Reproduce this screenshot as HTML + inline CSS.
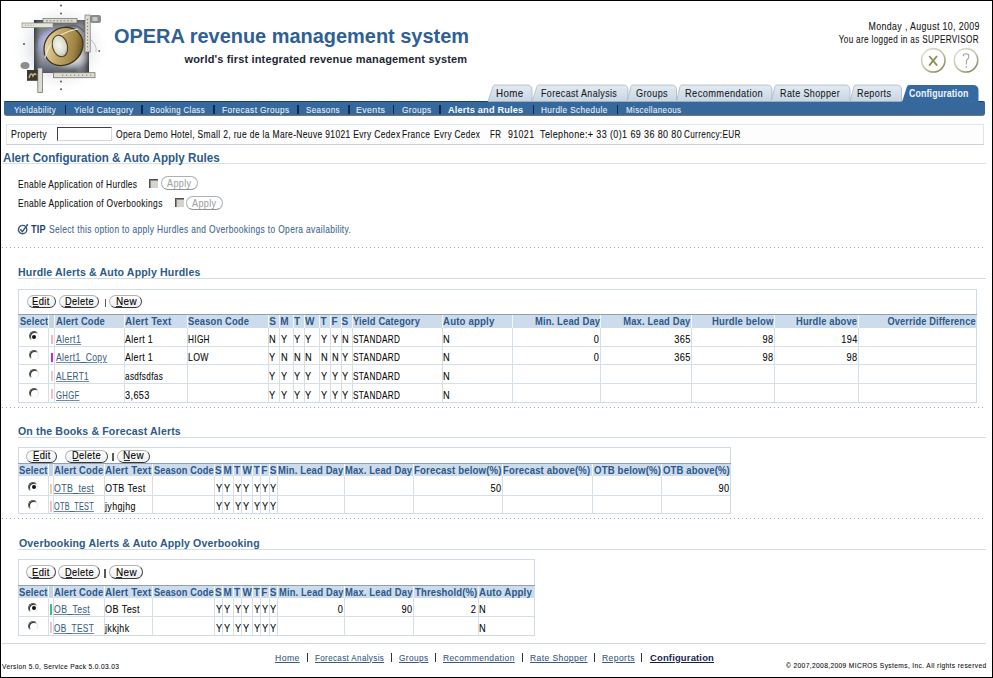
<!DOCTYPE html>
<html><head><meta charset="utf-8">
<style>
*{box-sizing:border-box}
html,body{margin:0;padding:0;background:#fff}
body{width:993px;height:678px;position:relative;overflow:hidden;font-family:"Liberation Sans",sans-serif;font-size:10px;color:#111}
.a{position:absolute;white-space:nowrap}
#frame{position:absolute;left:0;top:0;width:993px;height:678px;border:1px solid #000;z-index:50}
.btn{border:1px solid;border-color:#b4b4b4 #404040 #363636 #b4b4b4;border-radius:7px;background:linear-gradient(#ffffff,#eeeeee);z-index:2}
.radio{width:10px;height:10px;border-radius:50%;border:1px solid;border-color:#5a5a5a #e6e6e6 #f4f4f4 #5a5a5a;box-shadow:inset 1px 1px 0 #303030;background:#fff}
.radio.on:after{content:"";position:absolute;left:2.5px;top:2.5px;width:4px;height:4px;border-radius:50%;background:#111}
</style></head>
<body>
<div id="frame"></div>

<!-- LOGO -->
<svg class="a" style="left:0px;top:0px" width="110" height="100" viewBox="0 0 110 100">
 <defs>
  <radialGradient id="glow" cx="0.5" cy="0.5" r="0.5">
   <stop offset="0" stop-color="#aeb4bf" stop-opacity="0.85"/><stop offset="0.6" stop-color="#d9dde4" stop-opacity="0.55"/><stop offset="1" stop-color="#fff" stop-opacity="0"/>
  </radialGradient>
  <linearGradient id="sqv" x1="0" y1="0" x2="0" y2="1">
   <stop offset="0" stop-color="#2e3034"/><stop offset="0.12" stop-color="#6c7078"/><stop offset="0.55" stop-color="#c9ccd2"/><stop offset="0.85" stop-color="#6d7280"/><stop offset="1" stop-color="#3a3c42"/>
  </linearGradient>
  <linearGradient id="sqh" x1="0" y1="0" x2="1" y2="0">
   <stop offset="0" stop-color="#2a2c30" stop-opacity="0.85"/><stop offset="0.15" stop-color="#8a9098" stop-opacity="0.3"/><stop offset="0.75" stop-color="#fff" stop-opacity="0.15"/><stop offset="1" stop-color="#2e3034" stop-opacity="0.85"/>
  </linearGradient>
  <radialGradient id="whiteglow" cx="0.5" cy="0.5" r="0.5">
   <stop offset="0" stop-color="#ffffff" stop-opacity="0.9"/><stop offset="1" stop-color="#ffffff" stop-opacity="0"/>
  </radialGradient>
  <linearGradient id="gold" x1="0.1" y1="0.1" x2="0.9" y2="0.9">
   <stop offset="0" stop-color="#eadfb4"/><stop offset="0.35" stop-color="#c6ad6c"/><stop offset="0.75" stop-color="#a08444"/><stop offset="1" stop-color="#5a4822"/>
  </linearGradient>
  <radialGradient id="globe" cx="0.45" cy="0.5" r="0.6">
   <stop offset="0" stop-color="#d4d6e2"/><stop offset="0.6" stop-color="#a8a8cc"/><stop offset="0.88" stop-color="#7c7cb0"/><stop offset="1" stop-color="#34365a"/>
  </radialGradient>
  <radialGradient id="hole" cx="0.45" cy="0.45" r="0.6">
   <stop offset="0" stop-color="#f6f8f0"/><stop offset="0.7" stop-color="#d8dccc"/><stop offset="1" stop-color="#9a9a78"/>
  </radialGradient>
 </defs>
 <ellipse cx="60" cy="48" rx="50" ry="46" fill="url(#glow)"/>
 <rect x="34" y="20" width="55" height="53" fill="url(#sqv)"/>
 <rect x="34" y="20" width="55" height="53" fill="url(#sqh)"/>
 <ellipse cx="70" cy="58" rx="20" ry="12" fill="url(#whiteglow)"/>
 <circle cx="54" cy="44" r="16" fill="url(#globe)"/>
 <path d="M62 28 Q78 22 84 32" fill="none" stroke="#60646c" stroke-width="1.3"/><path d="M86 36 Q98 44 96 52" fill="none" stroke="#b0b4ba" stroke-width="0.8"/>
  <ellipse cx="63.5" cy="46.5" rx="20.5" ry="18" fill="url(#gold)" stroke="#3e3218" stroke-width="1.3" transform="rotate(-40 63.5 46.5)"/>
 <path d="M45 58 Q50 34 78 29" fill="none" stroke="#f2f2ea" stroke-width="1.1" opacity="0.9"/>
 <ellipse cx="60" cy="46" rx="7.5" ry="11" fill="url(#hole)" stroke="#4a3a1c" stroke-width="1" transform="rotate(-15 60 46)"/>
 
 <rect x="43" y="18.5" width="34" height="4.5" fill="#dcdcd4" stroke="#6e6e68" stroke-width="0.7"/><path d="M46 20.8 H74" stroke="#77776f" stroke-width="0.8" stroke-dasharray="2 1.5"/>
 <rect x="22" y="23" width="31" height="4.5" fill="#e4e4dc" stroke="#86867e" stroke-width="0.7"/><path d="M25 25.2 H34" stroke="#8a8a82" stroke-width="0.8" stroke-dasharray="1.2 1.5"/>
 <rect x="85" y="15" width="5.2" height="37" fill="#dcdcd4" stroke="#74746c" stroke-width="0.7"/>
 <path d="M87.6 19 V50" stroke="#6a6a62" stroke-width="0.9" stroke-dasharray="1.2 2.2"/>
 <rect x="53.5" y="72.7" width="41.5" height="5" fill="#dcdcd4" stroke="#74746c" stroke-width="0.8"/>
 <path d="M62 75.2 H92" stroke="#6a6a62" stroke-width="0.9" stroke-dasharray="1.2 2.8"/>
 <rect x="37.8" y="68" width="4.6" height="24.5" fill="#dcdcd4" stroke="#74746c" stroke-width="0.8"/>
 <rect x="90" y="15" width="11" height="8" fill="#8c8c8c" rx="2"/><rect x="92.5" y="17" width="5" height="4" fill="#c8c8c8"/>
 <rect x="27" y="70" width="10.7" height="10.8" fill="#3c382c"/>
 <path d="M29 78 Q31 71 33 76 Q35 72 36 75" fill="none" stroke="#c8b890" stroke-width="1.4"/>
 <ellipse cx="25" cy="65.5" rx="4.5" ry="3.5" fill="#7a7a78" opacity="0.85"/>
 <circle cx="61" cy="5.5" r="1" fill="#555"/><circle cx="61" cy="13.6" r="1" fill="#555"/>
 <circle cx="61" cy="81.5" r="1" fill="#555"/><circle cx="61" cy="89.3" r="1" fill="#555"/>
 <circle cx="24" cy="44" r="1" fill="#555"/><circle cx="99.2" cy="51" r="1" fill="#666"/>
</svg>

<!-- help / exit icons -->
<svg class="a" style="left:919px;top:46px" width="62" height="28" viewBox="0 0 62 28">
 <defs>
  <linearGradient id="ring" x1="0.15" y1="0.1" x2="0.85" y2="0.95">
   <stop offset="0" stop-color="#dcdccf"/><stop offset="0.5" stop-color="#c4c4ac"/><stop offset="1" stop-color="#85885a"/>
  </linearGradient>
 </defs>
 <circle cx="14.3" cy="14.3" r="11.7" fill="#fff" stroke="url(#ring)" stroke-width="1.6"/>
 <path d="M10.2 10 L18.2 19.6 M18 10 L10.2 19.6" stroke="#8b8f5a" stroke-width="1.8"/>
 <circle cx="47" cy="14.3" r="11.7" fill="#fff" stroke="url(#ring)" stroke-width="1.6"/>
 <path d="M44.2 10.2 Q44.2 7.7 47 7.7 Q49.8 7.7 49.8 10.4 Q49.8 12.4 47.4 14.4 L47.4 18.4" fill="none" stroke="#a0a0a0" stroke-width="1.05"/>
 <circle cx="47.4" cy="21" r="0.75" fill="#8a8a8a"/>
</svg>

<!-- TABS -->
<svg class="a" style="left:480px;top:80px;z-index:2" width="510" height="24" viewBox="480 80 510 24">
 <defs>
  <linearGradient id="tg" x1="0" y1="0" x2="0" y2="1"><stop offset="0" stop-color="#e4ebf2"/><stop offset="1" stop-color="#c7d5e3"/></linearGradient>
 </defs>
 <g fill="url(#tg)" stroke="#a9b6c3" stroke-width="0.8">
  <path d="M488 101.5 L493 86.5 Q493.5 85 495 85 L527 85 Q532 85 532 90 L532 101.5 Z"/>
  <path d="M532 101.5 L537 86.5 Q537.5 85 539 85 L623 85 Q628 85 628 90 L628 101.5 Z"/>
  <path d="M627 101.5 L631 86.5 Q631.5 85 633 85 L671.5 85 Q676.5 85 676.5 90 L676.5 101.5 Z"/>
  <path d="M676.5 101.5 L680 86.5 Q680.5 85 682 85 L767 85 Q772 85 772 90 L772 101.5 Z"/>
  <path d="M771 101.5 L775 86.5 Q775.5 85 777 85 L845 85 Q850 85 850 90 L850 101.5 Z"/>
  <path d="M850 101.5 L854 86.5 Q854.5 85 856 85 L896.5 85 Q901.5 85 901.5 90 L901.5 101.5 Z"/>
 </g>
 <path d="M902 102 L907 86.5 Q907.5 85 909 85 L973 85 Q978.5 85 978.5 90.5 L978.5 102 Z" fill="#3769a1"/>
</svg>

<!-- SUBNAV BAR -->
<div class="a" style="left:4px;top:101px;width:981px;height:15px;background:linear-gradient(#36689c 0,#36689c 11px,#4b6684 13px,#7d8a98 14px);border-top:1px solid #123e70;border-radius:1px 2px 3px 3px;z-index:1"></div>

<!-- PROPERTY BOX -->
<div class="a" style="left:6px;top:124px;width:978px;height:21px;border:1px solid #e0e6ec;border-bottom-color:#c9d2db;background:#fdfdfd"></div>
<div class="a" style="left:57px;top:127px;width:55px;height:14px;border:1px solid;border-color:#404040 #d6d6d6 #d6d6d6 #404040;background:#fff"></div>

<!-- alert config -->
<div class="a" style="left:3px;top:163px;width:983px;height:1px;background:#d9e1e8"></div>
<div class="a" style="left:149px;top:179px;width:9px;height:8.5px;border-left:1px solid #505050;border-top:1px solid #505050;box-shadow:inset 1px 1px 0 #8a8a8a;background:#d6d3cc"></div>
<div class="a" style="left:161px;top:176px;width:36.5px;height:14.3px;border:1px solid #a9b2ba;border-bottom-color:#8c949c;border-radius:7px;background:#fff"></div>
<div class="a" style="left:174.5px;top:198.3px;width:9px;height:8.5px;border-left:1px solid #505050;border-top:1px solid #505050;box-shadow:inset 1px 1px 0 #8a8a8a;background:#d6d3cc"></div>
<div class="a" style="left:186.2px;top:196.3px;width:36.5px;height:13.5px;border:1px solid #a9b2ba;border-bottom-color:#8c949c;border-radius:7px;background:#fff"></div>
<svg class="a" style="left:17px;top:223px" width="12" height="12" viewBox="0 0 12 12">
 <circle cx="5.6" cy="6.6" r="4.2" fill="none" stroke="#3d5a7a" stroke-width="1.4"/>
 <path d="M3.2 6.2 L5.4 8.6 L10.8 1.2" fill="none" stroke="#3d5a7a" stroke-width="1.6"/>
</svg>
<div class="a" style="left:2px;top:247px;width:984px;height:1px;background-image:linear-gradient(to right,#a6a6a6 0,#a6a6a6 1px,transparent 1px);background-size:4px 1px"></div>

<!-- section underlines -->
<div class="a" style="left:18px;top:278px;width:968px;height:1px;background:#d3dce4"></div>
<div class="a" style="left:2px;top:407px;width:984px;height:1px;background-image:linear-gradient(to right,#a6a6a6 0,#a6a6a6 1px,transparent 1px);background-size:4px 1px"></div>
<div class="a" style="left:18px;top:437px;width:968px;height:1px;background:#d3dce4"></div>
<div class="a" style="left:2px;top:518px;width:984px;height:1px;background-image:linear-gradient(to right,#a6a6a6 0,#a6a6a6 1px,transparent 1px);background-size:4px 1px"></div>
<div class="a" style="left:18px;top:549px;width:968px;height:1px;background:#d3dce4"></div>

<!-- footer line -->
<div class="a" style="left:2px;top:643px;width:984px;height:1px;background:#d3d9de"></div>

<div class="a" style="left:64.8px;top:105px;width:1.6px;height:9px;background:#0c2a52;z-index:3"></div>
<div class="a" style="left:141.3px;top:105px;width:1.6px;height:9px;background:#0c2a52;z-index:3"></div>
<div class="a" style="left:213.3px;top:105px;width:1.6px;height:9px;background:#0c2a52;z-index:3"></div>
<div class="a" style="left:297.2px;top:105px;width:1.6px;height:9px;background:#0c2a52;z-index:3"></div>
<div class="a" style="left:348.1px;top:105px;width:1.6px;height:9px;background:#0c2a52;z-index:3"></div>
<div class="a" style="left:392.8px;top:105px;width:1.6px;height:9px;background:#0c2a52;z-index:3"></div>
<div class="a" style="left:439.4px;top:105px;width:1.6px;height:9px;background:#0c2a52;z-index:3"></div>
<div class="a" style="left:532.7px;top:105px;width:1.6px;height:9px;background:#0c2a52;z-index:3"></div>
<div class="a" style="left:616.5px;top:105px;width:1.6px;height:9px;background:#0c2a52;z-index:3"></div>
<div class="a" style="left:18px;top:289px;width:959px;height:114px;border:1px solid #cfdae4"></div>
<div class="a" style="left:18px;top:314px;width:959px;height:14px;background:#cddcec;border-top:1px solid #919fae"></div>
<div class="a" style="left:48px;top:315px;width:6px;height:13px;background:#c6d3e0"></div>
<div class="a" style="left:48px;top:315px;width:1px;height:13px;background:#f4f8fb"></div>
<div class="a" style="left:54px;top:315px;width:1px;height:13px;background:#f4f8fb"></div>
<div class="a" style="left:124px;top:315px;width:1px;height:13px;background:#f4f8fb"></div>
<div class="a" style="left:187px;top:315px;width:1px;height:13px;background:#f4f8fb"></div>
<div class="a" style="left:268px;top:315px;width:1px;height:13px;background:#f4f8fb"></div>
<div class="a" style="left:279px;top:315px;width:1px;height:13px;background:#f4f8fb"></div>
<div class="a" style="left:293px;top:315px;width:1px;height:13px;background:#f4f8fb"></div>
<div class="a" style="left:304px;top:315px;width:1px;height:13px;background:#f4f8fb"></div>
<div class="a" style="left:319px;top:315px;width:1px;height:13px;background:#f4f8fb"></div>
<div class="a" style="left:330px;top:315px;width:1px;height:13px;background:#f4f8fb"></div>
<div class="a" style="left:341px;top:315px;width:1px;height:13px;background:#f4f8fb"></div>
<div class="a" style="left:352px;top:315px;width:1px;height:13px;background:#f4f8fb"></div>
<div class="a" style="left:442px;top:315px;width:1px;height:13px;background:#f4f8fb"></div>
<div class="a" style="left:512px;top:315px;width:1px;height:13px;background:#f4f8fb"></div>
<div class="a" style="left:600px;top:315px;width:1px;height:13px;background:#f4f8fb"></div>
<div class="a" style="left:691px;top:315px;width:1px;height:13px;background:#f4f8fb"></div>
<div class="a" style="left:774px;top:315px;width:1px;height:13px;background:#f4f8fb"></div>
<div class="a" style="left:858px;top:315px;width:1px;height:13px;background:#f4f8fb"></div>
<div class="a" style="left:48px;top:328px;width:1px;height:74px;background:#d5dfe8"></div>
<div class="a" style="left:54px;top:328px;width:1px;height:74px;background:#d5dfe8"></div>
<div class="a" style="left:124px;top:328px;width:1px;height:74px;background:#d5dfe8"></div>
<div class="a" style="left:187px;top:328px;width:1px;height:74px;background:#d5dfe8"></div>
<div class="a" style="left:268px;top:328px;width:1px;height:74px;background:#d5dfe8"></div>
<div class="a" style="left:279px;top:328px;width:1px;height:74px;background:#d5dfe8"></div>
<div class="a" style="left:293px;top:328px;width:1px;height:74px;background:#d5dfe8"></div>
<div class="a" style="left:304px;top:328px;width:1px;height:74px;background:#d5dfe8"></div>
<div class="a" style="left:319px;top:328px;width:1px;height:74px;background:#d5dfe8"></div>
<div class="a" style="left:330px;top:328px;width:1px;height:74px;background:#d5dfe8"></div>
<div class="a" style="left:341px;top:328px;width:1px;height:74px;background:#d5dfe8"></div>
<div class="a" style="left:352px;top:328px;width:1px;height:74px;background:#d5dfe8"></div>
<div class="a" style="left:442px;top:328px;width:1px;height:74px;background:#d5dfe8"></div>
<div class="a" style="left:512px;top:328px;width:1px;height:74px;background:#d5dfe8"></div>
<div class="a" style="left:600px;top:328px;width:1px;height:74px;background:#d5dfe8"></div>
<div class="a" style="left:691px;top:328px;width:1px;height:74px;background:#d5dfe8"></div>
<div class="a" style="left:774px;top:328px;width:1px;height:74px;background:#d5dfe8"></div>
<div class="a" style="left:858px;top:328px;width:1px;height:74px;background:#d5dfe8"></div>
<div class="a" style="left:18px;top:346px;width:958px;height:1px;background:#d5dfe8"></div>
<div class="a" style="left:18px;top:364px;width:958px;height:1px;background:#d5dfe8"></div>
<div class="a" style="left:18px;top:383px;width:958px;height:1px;background:#d5dfe8"></div>
<div class="a radio on" style="left:28.6px;top:331.3px"></div>
<div class="a" style="left:50.7px;top:334.5px;width:2px;height:9.100000000000023px;background:#f0b4c6"></div>
<div class="a radio" style="left:28.6px;top:350.2px"></div>
<div class="a" style="left:50.7px;top:352.7px;width:2px;height:9.800000000000011px;background:#c428c4"></div>
<div class="a radio" style="left:28.6px;top:369px"></div>
<div class="a" style="left:50.7px;top:371px;width:2px;height:9.699999999999989px;background:#f2c6c8"></div>
<div class="a radio" style="left:28.6px;top:387.8px"></div>
<div class="a" style="left:50.7px;top:389px;width:2px;height:10px;background:#f0c0c8"></div>
<div class="a btn" style="left:26.5px;top:295.2px;width:29.1px;height:13.300000000000011px"></div>
<div class="a" style="left:33.099999999999994px;top:306.3px;width:6px;height:1px;background:#333;z-index:4"></div>
<div class="a btn" style="left:58.6px;top:295.2px;width:40.6px;height:13.300000000000011px"></div>
<div class="a" style="left:65.35000000000001px;top:306.3px;width:6px;height:1px;background:#333;z-index:4"></div>
<div class="a" style="left:104.5px;top:298.7px;width:1.7px;height:8.300000000000011px;background:#5a5a5a"></div>
<div class="a btn" style="left:109.4px;top:295.2px;width:33.0px;height:13.300000000000011px"></div>
<div class="a" style="left:116.35000000000001px;top:306.3px;width:6px;height:1px;background:#333;z-index:4"></div>
<div class="a" style="left:18px;top:447px;width:713px;height:67px;border:1px solid #cfdae4"></div>
<div class="a" style="left:18px;top:463px;width:713px;height:13px;background:#cddcec;border-top:1px solid #919fae"></div>
<div class="a" style="left:48px;top:464px;width:5px;height:12px;background:#c6d3e0"></div>
<div class="a" style="left:48px;top:464px;width:1px;height:12px;background:#f4f8fb"></div>
<div class="a" style="left:53px;top:464px;width:1px;height:12px;background:#f4f8fb"></div>
<div class="a" style="left:104px;top:464px;width:1px;height:12px;background:#f4f8fb"></div>
<div class="a" style="left:152px;top:464px;width:1px;height:12px;background:#f4f8fb"></div>
<div class="a" style="left:214px;top:464px;width:1px;height:12px;background:#f4f8fb"></div>
<div class="a" style="left:222px;top:464px;width:1px;height:12px;background:#f4f8fb"></div>
<div class="a" style="left:233px;top:464px;width:1px;height:12px;background:#f4f8fb"></div>
<div class="a" style="left:241px;top:464px;width:1px;height:12px;background:#f4f8fb"></div>
<div class="a" style="left:252px;top:464px;width:1px;height:12px;background:#f4f8fb"></div>
<div class="a" style="left:260px;top:464px;width:1px;height:12px;background:#f4f8fb"></div>
<div class="a" style="left:269px;top:464px;width:1px;height:12px;background:#f4f8fb"></div>
<div class="a" style="left:277px;top:464px;width:1px;height:12px;background:#f4f8fb"></div>
<div class="a" style="left:344px;top:464px;width:1px;height:12px;background:#f4f8fb"></div>
<div class="a" style="left:413px;top:464px;width:1px;height:12px;background:#f4f8fb"></div>
<div class="a" style="left:502px;top:464px;width:1px;height:12px;background:#f4f8fb"></div>
<div class="a" style="left:592px;top:464px;width:1px;height:12px;background:#f4f8fb"></div>
<div class="a" style="left:661px;top:464px;width:1px;height:12px;background:#f4f8fb"></div>
<div class="a" style="left:48px;top:476px;width:1px;height:37px;background:#d5dfe8"></div>
<div class="a" style="left:53px;top:476px;width:1px;height:37px;background:#d5dfe8"></div>
<div class="a" style="left:104px;top:476px;width:1px;height:37px;background:#d5dfe8"></div>
<div class="a" style="left:152px;top:476px;width:1px;height:37px;background:#d5dfe8"></div>
<div class="a" style="left:214px;top:476px;width:1px;height:37px;background:#d5dfe8"></div>
<div class="a" style="left:222px;top:476px;width:1px;height:37px;background:#d5dfe8"></div>
<div class="a" style="left:233px;top:476px;width:1px;height:37px;background:#d5dfe8"></div>
<div class="a" style="left:241px;top:476px;width:1px;height:37px;background:#d5dfe8"></div>
<div class="a" style="left:252px;top:476px;width:1px;height:37px;background:#d5dfe8"></div>
<div class="a" style="left:260px;top:476px;width:1px;height:37px;background:#d5dfe8"></div>
<div class="a" style="left:269px;top:476px;width:1px;height:37px;background:#d5dfe8"></div>
<div class="a" style="left:277px;top:476px;width:1px;height:37px;background:#d5dfe8"></div>
<div class="a" style="left:344px;top:476px;width:1px;height:37px;background:#d5dfe8"></div>
<div class="a" style="left:413px;top:476px;width:1px;height:37px;background:#d5dfe8"></div>
<div class="a" style="left:502px;top:476px;width:1px;height:37px;background:#d5dfe8"></div>
<div class="a" style="left:592px;top:476px;width:1px;height:37px;background:#d5dfe8"></div>
<div class="a" style="left:661px;top:476px;width:1px;height:37px;background:#d5dfe8"></div>
<div class="a" style="left:18px;top:495px;width:712px;height:1px;background:#d5dfe8"></div>
<div class="a radio on" style="left:28.200000000000003px;top:481.6px"></div>
<div class="a" style="left:50.4px;top:483.5px;width:2px;height:10.100000000000023px;background:#f3cc98"></div>
<div class="a radio" style="left:28.200000000000003px;top:500px"></div>
<div class="a" style="left:50.4px;top:501px;width:2px;height:10.5px;background:#f0c2cc"></div>
<div class="a btn" style="left:25.8px;top:449.7px;width:30.999999999999996px;height:12.900000000000034px"></div>
<div class="a" style="left:33.349999999999994px;top:460.40000000000003px;width:6px;height:1px;background:#333;z-index:4"></div>
<div class="a btn" style="left:64.9px;top:449.7px;width:42.89999999999999px;height:12.900000000000034px"></div>
<div class="a" style="left:72.8px;top:460.40000000000003px;width:6px;height:1px;background:#333;z-index:4"></div>
<div class="a" style="left:112px;top:453.2px;width:1.7px;height:7.900000000000034px;background:#5a5a5a"></div>
<div class="a btn" style="left:116.8px;top:449.7px;width:33.2px;height:12.900000000000034px"></div>
<div class="a" style="left:123.85000000000001px;top:460.40000000000003px;width:6px;height:1px;background:#333;z-index:4"></div>
<div class="a" style="left:18px;top:559px;width:517px;height:77px;border:1px solid #cfdae4"></div>
<div class="a" style="left:18px;top:585px;width:517px;height:13px;background:#cddcec;border-top:1px solid #919fae"></div>
<div class="a" style="left:48px;top:586px;width:5px;height:12px;background:#c6d3e0"></div>
<div class="a" style="left:48px;top:586px;width:1px;height:12px;background:#f4f8fb"></div>
<div class="a" style="left:53px;top:586px;width:1px;height:12px;background:#f4f8fb"></div>
<div class="a" style="left:104px;top:586px;width:1px;height:12px;background:#f4f8fb"></div>
<div class="a" style="left:152px;top:586px;width:1px;height:12px;background:#f4f8fb"></div>
<div class="a" style="left:214px;top:586px;width:1px;height:12px;background:#f4f8fb"></div>
<div class="a" style="left:222px;top:586px;width:1px;height:12px;background:#f4f8fb"></div>
<div class="a" style="left:233px;top:586px;width:1px;height:12px;background:#f4f8fb"></div>
<div class="a" style="left:241px;top:586px;width:1px;height:12px;background:#f4f8fb"></div>
<div class="a" style="left:252px;top:586px;width:1px;height:12px;background:#f4f8fb"></div>
<div class="a" style="left:260px;top:586px;width:1px;height:12px;background:#f4f8fb"></div>
<div class="a" style="left:269px;top:586px;width:1px;height:12px;background:#f4f8fb"></div>
<div class="a" style="left:277px;top:586px;width:1px;height:12px;background:#f4f8fb"></div>
<div class="a" style="left:344px;top:586px;width:1px;height:12px;background:#f4f8fb"></div>
<div class="a" style="left:413px;top:586px;width:1px;height:12px;background:#f4f8fb"></div>
<div class="a" style="left:478px;top:586px;width:1px;height:12px;background:#f4f8fb"></div>
<div class="a" style="left:48px;top:598px;width:1px;height:37px;background:#d5dfe8"></div>
<div class="a" style="left:53px;top:598px;width:1px;height:37px;background:#d5dfe8"></div>
<div class="a" style="left:104px;top:598px;width:1px;height:37px;background:#d5dfe8"></div>
<div class="a" style="left:152px;top:598px;width:1px;height:37px;background:#d5dfe8"></div>
<div class="a" style="left:214px;top:598px;width:1px;height:37px;background:#d5dfe8"></div>
<div class="a" style="left:222px;top:598px;width:1px;height:37px;background:#d5dfe8"></div>
<div class="a" style="left:233px;top:598px;width:1px;height:37px;background:#d5dfe8"></div>
<div class="a" style="left:241px;top:598px;width:1px;height:37px;background:#d5dfe8"></div>
<div class="a" style="left:252px;top:598px;width:1px;height:37px;background:#d5dfe8"></div>
<div class="a" style="left:260px;top:598px;width:1px;height:37px;background:#d5dfe8"></div>
<div class="a" style="left:269px;top:598px;width:1px;height:37px;background:#d5dfe8"></div>
<div class="a" style="left:277px;top:598px;width:1px;height:37px;background:#d5dfe8"></div>
<div class="a" style="left:344px;top:598px;width:1px;height:37px;background:#d5dfe8"></div>
<div class="a" style="left:413px;top:598px;width:1px;height:37px;background:#d5dfe8"></div>
<div class="a" style="left:478px;top:598px;width:1px;height:37px;background:#d5dfe8"></div>
<div class="a" style="left:18px;top:616px;width:516px;height:1px;background:#d5dfe8"></div>
<div class="a radio on" style="left:28.200000000000003px;top:602.5px"></div>
<div class="a" style="left:50.4px;top:603.6px;width:2px;height:11.100000000000023px;background:#34c488"></div>
<div class="a radio" style="left:28.200000000000003px;top:621px"></div>
<div class="a" style="left:50.4px;top:622px;width:2px;height:11px;background:#f0c2cc"></div>
<div class="a btn" style="left:25.8px;top:565.4px;width:30.2px;height:14.0px"></div>
<div class="a" style="left:32.949999999999996px;top:577.1999999999999px;width:6px;height:1px;background:#333;z-index:4"></div>
<div class="a btn" style="left:58.4px;top:565.4px;width:41.300000000000004px;height:14.0px"></div>
<div class="a" style="left:65.5px;top:577.1999999999999px;width:6px;height:1px;background:#333;z-index:4"></div>
<div class="a" style="left:104.2px;top:568.9px;width:1.7px;height:9.0px;background:#5a5a5a"></div>
<div class="a btn" style="left:109.2px;top:565.4px;width:33.39999999999999px;height:14.0px"></div>
<div class="a" style="left:116.35000000000001px;top:577.1999999999999px;width:6px;height:1px;background:#333;z-index:4"></div>
<div class="a" style="left:306.9px;top:653px;width:1.2px;height:9px;background:#333"></div>
<div class="a" style="left:391.2px;top:653px;width:1.2px;height:9px;background:#333"></div>
<div class="a" style="left:434.9px;top:653px;width:1.2px;height:9px;background:#333"></div>
<div class="a" style="left:522.0px;top:653px;width:1.2px;height:9px;background:#333"></div>
<div class="a" style="left:594.2px;top:653px;width:1.2px;height:9px;background:#333"></div>
<div class="a" style="left:641.3px;top:653px;width:1.2px;height:9px;background:#333"></div>
<div class="a" style="left:113.50px;transform-origin:0 50%;top:25.70px;font-size:20px;line-height:20px;font-weight:bold;color:#2f6094;letter-spacing:0px;transform:scaleX(0.9970);">OPERA revenue management system</div>
<div class="a" style="left:184.45px;transform-origin:0 50%;top:54.00px;font-size:11px;line-height:11px;font-weight:bold;color:#1c2733;letter-spacing:0.15px;">world's first integrated revenue management system</div>
<div class="a" style="right:13.58px;transform-origin:100% 50%;top:21.20px;font-size:10.5px;line-height:10.5px;font-weight:normal;color:#151515;letter-spacing:0.45px;transform:scaleX(0.8377);-webkit-text-stroke:0.1px #151515;">Monday , August 10, 2009</div>
<div class="a" style="right:13.64px;transform-origin:100% 50%;top:34.00px;font-size:10.5px;line-height:10.5px;font-weight:normal;color:#151515;letter-spacing:0.45px;transform:scaleX(0.7748);-webkit-text-stroke:0.1px #151515;">You are logged in as SUPERVISOR</div>
<div class="a" style="left:496.11px;transform-origin:0 50%;top:88.30px;font-size:10.5px;line-height:10.5px;font-weight:normal;color:#1a1a1a;letter-spacing:0.45px;transform:scaleX(0.9289);-webkit-text-stroke:0.1px #1a1a1a;z-index:3">Home</div>
<div class="a" style="left:540.96px;transform-origin:0 50%;top:88.30px;font-size:10.5px;line-height:10.5px;font-weight:normal;color:#1a1a1a;letter-spacing:0.45px;transform:scaleX(0.8469);-webkit-text-stroke:0.1px #1a1a1a;z-index:3">Forecast Analysis</div>
<div class="a" style="left:635.55px;transform-origin:0 50%;top:88.30px;font-size:10.5px;line-height:10.5px;font-weight:normal;color:#1a1a1a;letter-spacing:0.45px;transform:scaleX(0.8614);-webkit-text-stroke:0.1px #1a1a1a;z-index:3">Groups</div>
<div class="a" style="left:684.54px;transform-origin:0 50%;top:88.30px;font-size:10.5px;line-height:10.5px;font-weight:normal;color:#1a1a1a;letter-spacing:0.45px;transform:scaleX(0.8818);-webkit-text-stroke:0.1px #1a1a1a;z-index:3">Recommendation</div>
<div class="a" style="left:780.05px;transform-origin:0 50%;top:88.30px;font-size:10.5px;line-height:10.5px;font-weight:normal;color:#1a1a1a;letter-spacing:0.45px;transform:scaleX(0.8559);-webkit-text-stroke:0.1px #1a1a1a;z-index:3">Rate Shopper</div>
<div class="a" style="left:857.35px;transform-origin:0 50%;top:88.30px;font-size:10.5px;line-height:10.5px;font-weight:normal;color:#1a1a1a;letter-spacing:0.45px;transform:scaleX(0.8615);-webkit-text-stroke:0.1px #1a1a1a;z-index:3">Reports</div>
<div class="a" style="left:909.16px;transform-origin:0 50%;top:89.00px;font-size:10px;line-height:10px;font-weight:bold;color:#eef4fb;letter-spacing:0.15px;transform:scaleX(0.8802);z-index:3">Configuration</div>
<div class="a" style="left:14.21px;transform-origin:0 50%;top:105.00px;font-size:9.5px;line-height:9.5px;font-weight:normal;color:#e6eef8;letter-spacing:0.45px;transform:scaleX(0.8315);-webkit-text-stroke:0.1px #e6eef8;z-index:3">Yieldability</div>
<div class="a" style="left:73.89px;transform-origin:0 50%;top:105.00px;font-size:9.5px;line-height:9.5px;font-weight:normal;color:#e6eef8;letter-spacing:0.45px;transform:scaleX(0.8734);-webkit-text-stroke:0.1px #e6eef8;z-index:3">Yield Category</div>
<div class="a" style="left:150.21px;transform-origin:0 50%;top:105.00px;font-size:9.5px;line-height:9.5px;font-weight:normal;color:#e6eef8;letter-spacing:0.45px;transform:scaleX(0.8254);-webkit-text-stroke:0.1px #e6eef8;z-index:3">Booking Class</div>
<div class="a" style="left:221.59px;transform-origin:0 50%;top:105.00px;font-size:9.5px;line-height:9.5px;font-weight:normal;color:#e6eef8;letter-spacing:0.45px;transform:scaleX(0.8712);-webkit-text-stroke:0.1px #e6eef8;z-index:3">Forecast Groups</div>
<div class="a" style="left:305.60px;transform-origin:0 50%;top:105.00px;font-size:9.5px;line-height:9.5px;font-weight:normal;color:#e6eef8;letter-spacing:0.45px;transform:scaleX(0.8444);-webkit-text-stroke:0.1px #e6eef8;z-index:3">Seasons</div>
<div class="a" style="left:355.86px;transform-origin:0 50%;top:105.00px;font-size:9.5px;line-height:9.5px;font-weight:normal;color:#e6eef8;letter-spacing:0.45px;transform:scaleX(0.9226);-webkit-text-stroke:0.1px #e6eef8;z-index:3">Events</div>
<div class="a" style="left:401.98px;transform-origin:0 50%;top:105.00px;font-size:9.5px;line-height:9.5px;font-weight:normal;color:#e6eef8;letter-spacing:0.45px;transform:scaleX(0.8749);-webkit-text-stroke:0.1px #e6eef8;z-index:3">Groups</div>
<div class="a" style="left:448.04px;transform-origin:0 50%;top:105.00px;font-size:9.5px;line-height:9.5px;font-weight:bold;color:#f4f8fc;letter-spacing:0.15px;transform:scaleX(0.9741);z-index:3">Alerts and Rules</div>
<div class="a" style="left:541.29px;transform-origin:0 50%;top:105.00px;font-size:9.5px;line-height:9.5px;font-weight:normal;color:#e6eef8;letter-spacing:0.45px;transform:scaleX(0.8651);-webkit-text-stroke:0.1px #e6eef8;z-index:3">Hurdle Schedule</div>
<div class="a" style="left:625.60px;transform-origin:0 50%;top:105.00px;font-size:9.5px;line-height:9.5px;font-weight:normal;color:#e6eef8;letter-spacing:0.45px;transform:scaleX(0.8384);-webkit-text-stroke:0.1px #e6eef8;z-index:3">Miscellaneous</div>
<div class="a" style="left:11.36px;transform-origin:0 50%;top:129.00px;font-size:10.5px;line-height:10.5px;font-weight:normal;color:#111;letter-spacing:0.45px;transform:scaleX(0.8326);-webkit-text-stroke:0.1px #111;">Property</div>
<div class="a" style="left:115.58px;transform-origin:0 50%;top:129.00px;font-size:10.5px;line-height:10.5px;font-weight:normal;color:#111;letter-spacing:0.45px;transform:scaleX(0.8040);-webkit-text-stroke:0.1px #111;">Opera Demo Hotel, Small 2, rue de la Mare-Neuve 91021 Evry Cedex</div>
<div class="a" style="left:401.58px;transform-origin:0 50%;top:129.00px;font-size:10.5px;line-height:10.5px;font-weight:normal;color:#111;letter-spacing:0.45px;transform:scaleX(0.7967);-webkit-text-stroke:0.1px #111;">France</div>
<div class="a" style="left:433.59px;transform-origin:0 50%;top:129.00px;font-size:10.5px;line-height:10.5px;font-weight:normal;color:#111;letter-spacing:0.45px;transform:scaleX(0.7856);-webkit-text-stroke:0.1px #111;">Evry Cedex</div>
<div class="a" style="left:490.20px;transform-origin:0 50%;top:129.00px;font-size:10.5px;line-height:10.5px;font-weight:normal;color:#111;letter-spacing:0.45px;transform:scaleX(0.7534);-webkit-text-stroke:0.1px #111;">FR</div>
<div class="a" style="left:508.36px;transform-origin:0 50%;top:129.00px;font-size:10.5px;line-height:10.5px;font-weight:normal;color:#111;letter-spacing:0.45px;transform:scaleX(0.8413);-webkit-text-stroke:0.1px #111;">91021</div>
<div class="a" style="left:539.55px;transform-origin:0 50%;top:129.00px;font-size:10.5px;line-height:10.5px;font-weight:normal;color:#111;letter-spacing:0.45px;transform:scaleX(0.8558);-webkit-text-stroke:0.1px #111;">Telephone:+ 33 (0)1 69 36 80 80</div>
<div class="a" style="left:684.39px;transform-origin:0 50%;top:129.00px;font-size:10.5px;line-height:10.5px;font-weight:normal;color:#111;letter-spacing:0.45px;transform:scaleX(0.7766);-webkit-text-stroke:0.1px #111;">Currency:EUR</div>
<div class="a" style="left:2.92px;transform-origin:0 50%;top:151.50px;font-size:12px;line-height:12px;font-weight:bold;color:#2c5a89;letter-spacing:0px;transform:scaleX(0.9682);">Alert Configuration &amp; Auto Apply Rules</div>
<div class="a" style="left:18.08px;transform-origin:0 50%;top:178.50px;font-size:10.5px;line-height:10.5px;font-weight:normal;color:#111;letter-spacing:0.45px;transform:scaleX(0.7947);-webkit-text-stroke:0.1px #111;">Enable Application of Hurdles</div>
<div class="a" style="left:18.08px;transform-origin:0 50%;top:198.00px;font-size:10.5px;line-height:10.5px;font-weight:normal;color:#111;letter-spacing:0.45px;transform:scaleX(0.7991);-webkit-text-stroke:0.1px #111;">Enable Application of Overbookings</div>
<div class="a" style="left:167.15px;transform-origin:0 50%;top:178.00px;font-size:10.5px;line-height:10.5px;font-weight:normal;color:#a3a3a3;letter-spacing:0.45px;transform:scaleX(0.8588);-webkit-text-stroke:0.1px #a3a3a3;text-decoration:underline;text-decoration-color:transparent">Apply</div>
<div class="a" style="left:192.35px;transform-origin:0 50%;top:197.50px;font-size:10.5px;line-height:10.5px;font-weight:normal;color:#a3a3a3;letter-spacing:0.45px;transform:scaleX(0.8588);-webkit-text-stroke:0.1px #a3a3a3;">Apply</div>
<div class="a" style="left:31.04px;transform-origin:0 50%;top:224.70px;font-size:10px;line-height:10px;font-weight:bold;color:#2a3f70;letter-spacing:0.15px;transform:scaleX(0.9149);">TIP</div>
<div class="a" style="left:48.58px;transform-origin:0 50%;top:223.70px;font-size:10.5px;line-height:10.5px;font-weight:normal;color:#3f6590;letter-spacing:0.45px;transform:scaleX(0.7996);-webkit-text-stroke:0.1px #3f6590;">Select this option to apply Hurdles and Overbookings to Opera availability.</div>
<div class="a" style="left:18.47px;transform-origin:0 50%;top:267.00px;font-size:11px;line-height:11px;font-weight:bold;color:#2c5a89;letter-spacing:0.15px;transform:scaleX(0.9621);">Hurdle Alerts &amp; Auto Apply Hurdles</div>
<div class="a" style="left:18.07px;transform-origin:0 50%;top:426.30px;font-size:11px;line-height:11px;font-weight:bold;color:#2c5a89;letter-spacing:0.15px;transform:scaleX(0.9596);">On the Books &amp; Forecast Alerts</div>
<div class="a" style="left:18.67px;transform-origin:0 50%;top:538.20px;font-size:11px;line-height:11px;font-weight:bold;color:#2c5a89;letter-spacing:0.15px;transform:scaleX(0.9597);">Overbooking Alerts &amp; Auto Apply Overbooking</div>
<div class="a" style="left:19.53px;transform-origin:0 50%;top:316.80px;font-size:10px;line-height:10px;font-weight:bold;color:#2d5888;letter-spacing:0.15px;transform:scaleX(0.9307);">Select</div>
<div class="a" style="left:55.53px;transform-origin:0 50%;top:316.80px;font-size:10px;line-height:10px;font-weight:bold;color:#2d5888;letter-spacing:0.15px;transform:scaleX(0.9408);">Alert Code</div>
<div class="a" style="left:125.31px;transform-origin:0 50%;top:316.80px;font-size:10px;line-height:10px;font-weight:bold;color:#2d5888;letter-spacing:0.15px;transform:scaleX(0.9882);">Alert Text</div>
<div class="a" style="left:187.53px;transform-origin:0 50%;top:316.80px;font-size:10px;line-height:10px;font-weight:bold;color:#2d5888;letter-spacing:0.15px;transform:scaleX(0.9397);">Season Code</div>
<div class="a" style="left:269.30px;transform-origin:0 50%;top:316.80px;font-size:10px;line-height:10px;font-weight:bold;color:#2d5888;letter-spacing:0.15px;">S</div>
<div class="a" style="left:280.30px;transform-origin:0 50%;top:316.80px;font-size:10px;line-height:10px;font-weight:bold;color:#2d5888;letter-spacing:0.15px;">M</div>
<div class="a" style="left:294.00px;transform-origin:0 50%;top:316.80px;font-size:10px;line-height:10px;font-weight:bold;color:#2d5888;letter-spacing:0.15px;">T</div>
<div class="a" style="left:304.90px;transform-origin:0 50%;top:316.80px;font-size:10px;line-height:10px;font-weight:bold;color:#2d5888;letter-spacing:0.15px;">W</div>
<div class="a" style="left:320.50px;transform-origin:0 50%;top:316.80px;font-size:10px;line-height:10px;font-weight:bold;color:#2d5888;letter-spacing:0.15px;">T</div>
<div class="a" style="left:331.50px;transform-origin:0 50%;top:316.80px;font-size:10px;line-height:10px;font-weight:bold;color:#2d5888;letter-spacing:0.15px;">F</div>
<div class="a" style="left:341.50px;transform-origin:0 50%;top:316.80px;font-size:10px;line-height:10px;font-weight:bold;color:#2d5888;letter-spacing:0.15px;">S</div>
<div class="a" style="left:353.23px;transform-origin:0 50%;top:316.80px;font-size:10px;line-height:10px;font-weight:bold;color:#2d5888;letter-spacing:0.15px;transform:scaleX(0.9334);">Yield Category</div>
<div class="a" style="left:443.22px;transform-origin:0 50%;top:316.80px;font-size:10px;line-height:10px;font-weight:bold;color:#2d5888;letter-spacing:0.15px;transform:scaleX(0.9669);">Auto apply</div>
<div class="a" style="right:392.99px;transform-origin:100% 50%;top:316.80px;font-size:10px;line-height:10px;font-weight:bold;color:#2d5888;letter-spacing:0.15px;transform:scaleX(0.9436);">Min. Lead Day</div>
<div class="a" style="right:302.39px;transform-origin:100% 50%;top:316.80px;font-size:10px;line-height:10px;font-weight:bold;color:#2d5888;letter-spacing:0.15px;transform:scaleX(0.9404);">Max. Lead Day</div>
<div class="a" style="right:219.38px;transform-origin:100% 50%;top:316.80px;font-size:10px;line-height:10px;font-weight:bold;color:#2d5888;letter-spacing:0.15px;transform:scaleX(0.9536);">Hurdle below</div>
<div class="a" style="right:135.69px;transform-origin:100% 50%;top:316.80px;font-size:10px;line-height:10px;font-weight:bold;color:#2d5888;letter-spacing:0.15px;transform:scaleX(0.9390);">Hurdle above</div>
<div class="a" style="right:17.50px;transform-origin:100% 50%;top:316.80px;font-size:10px;line-height:10px;font-weight:bold;color:#2d5888;letter-spacing:0.15px;transform:scaleX(0.9215);">Override Difference</div>
<div class="a" style="left:55.56px;transform-origin:0 50%;top:334.20px;font-size:10.5px;line-height:10.5px;font-weight:normal;color:#3f5f82;letter-spacing:0.45px;transform:scaleX(0.8345);-webkit-text-stroke:0.1px #3f5f82;text-decoration:underline;text-decoration-color:#6f8aa6">Alert1</div>
<div class="a" style="left:125.06px;transform-origin:0 50%;top:334.20px;font-size:10.5px;line-height:10.5px;font-weight:normal;color:#0a0a0a;letter-spacing:0.45px;transform:scaleX(0.8406);-webkit-text-stroke:0.1px #0a0a0a;">Alert 1</div>
<div class="a" style="left:188.19px;transform-origin:0 50%;top:334.20px;font-size:10.5px;line-height:10.5px;font-weight:normal;color:#0a0a0a;letter-spacing:0.45px;transform:scaleX(0.7793);-webkit-text-stroke:0.1px #0a0a0a;">HIGH</div>
<div class="a" style="left:269.34px;transform-origin:0 50%;top:334.20px;font-size:10.5px;line-height:10.5px;font-weight:normal;color:#0a0a0a;letter-spacing:0.45px;transform:scaleX(0.8800);-webkit-text-stroke:0.1px #0a0a0a;">N</div>
<div class="a" style="left:280.94px;transform-origin:0 50%;top:334.20px;font-size:10.5px;line-height:10.5px;font-weight:normal;color:#0a0a0a;letter-spacing:0.45px;transform:scaleX(0.8800);-webkit-text-stroke:0.1px #0a0a0a;">Y</div>
<div class="a" style="left:294.04px;transform-origin:0 50%;top:334.20px;font-size:10.5px;line-height:10.5px;font-weight:normal;color:#0a0a0a;letter-spacing:0.45px;transform:scaleX(0.8800);-webkit-text-stroke:0.1px #0a0a0a;">Y</div>
<div class="a" style="left:304.94px;transform-origin:0 50%;top:334.20px;font-size:10.5px;line-height:10.5px;font-weight:normal;color:#0a0a0a;letter-spacing:0.45px;transform:scaleX(0.8800);-webkit-text-stroke:0.1px #0a0a0a;">Y</div>
<div class="a" style="left:320.54px;transform-origin:0 50%;top:334.20px;font-size:10.5px;line-height:10.5px;font-weight:normal;color:#0a0a0a;letter-spacing:0.45px;transform:scaleX(0.8800);-webkit-text-stroke:0.1px #0a0a0a;">Y</div>
<div class="a" style="left:331.74px;transform-origin:0 50%;top:334.20px;font-size:10.5px;line-height:10.5px;font-weight:normal;color:#0a0a0a;letter-spacing:0.45px;transform:scaleX(0.8800);-webkit-text-stroke:0.1px #0a0a0a;">Y</div>
<div class="a" style="left:341.84px;transform-origin:0 50%;top:334.20px;font-size:10.5px;line-height:10.5px;font-weight:normal;color:#0a0a0a;letter-spacing:0.45px;transform:scaleX(0.8800);-webkit-text-stroke:0.1px #0a0a0a;">N</div>
<div class="a" style="left:353.29px;transform-origin:0 50%;top:334.20px;font-size:10.5px;line-height:10.5px;font-weight:normal;color:#0a0a0a;letter-spacing:0.45px;transform:scaleX(0.7803);-webkit-text-stroke:0.1px #0a0a0a;">STANDARD</div>
<div class="a" style="left:443.24px;transform-origin:0 50%;top:334.20px;font-size:10.5px;line-height:10.5px;font-weight:normal;color:#0a0a0a;letter-spacing:0.45px;transform:scaleX(0.8800);-webkit-text-stroke:0.1px #0a0a0a;">N</div>
<div class="a" style="right:393.64px;transform-origin:100% 50%;top:334.20px;font-size:10.5px;line-height:10.5px;font-weight:normal;color:#0a0a0a;letter-spacing:0.45px;transform:scaleX(0.8800);-webkit-text-stroke:0.1px #0a0a0a;">0</div>
<div class="a" style="right:302.64px;transform-origin:100% 50%;top:334.20px;font-size:10.5px;line-height:10.5px;font-weight:normal;color:#0a0a0a;letter-spacing:0.45px;transform:scaleX(0.8800);-webkit-text-stroke:0.1px #0a0a0a;">365</div>
<div class="a" style="right:219.54px;transform-origin:100% 50%;top:334.20px;font-size:10.5px;line-height:10.5px;font-weight:normal;color:#0a0a0a;letter-spacing:0.45px;transform:scaleX(0.8800);-webkit-text-stroke:0.1px #0a0a0a;">98</div>
<div class="a" style="right:135.64px;transform-origin:100% 50%;top:334.20px;font-size:10.5px;line-height:10.5px;font-weight:normal;color:#0a0a0a;letter-spacing:0.45px;transform:scaleX(0.8800);-webkit-text-stroke:0.1px #0a0a0a;">194</div>
<div class="a" style="left:55.57px;transform-origin:0 50%;top:352.30px;font-size:10.5px;line-height:10.5px;font-weight:normal;color:#3f5f82;letter-spacing:0.45px;transform:scaleX(0.8149);-webkit-text-stroke:0.1px #3f5f82;text-decoration:underline;text-decoration-color:#6f8aa6">Alert1_Copy</div>
<div class="a" style="left:125.06px;transform-origin:0 50%;top:352.30px;font-size:10.5px;line-height:10.5px;font-weight:normal;color:#0a0a0a;letter-spacing:0.45px;transform:scaleX(0.8406);-webkit-text-stroke:0.1px #0a0a0a;">Alert 1</div>
<div class="a" style="left:188.17px;transform-origin:0 50%;top:352.30px;font-size:10.5px;line-height:10.5px;font-weight:normal;color:#0a0a0a;letter-spacing:0.45px;transform:scaleX(0.8284);-webkit-text-stroke:0.1px #0a0a0a;">LOW</div>
<div class="a" style="left:269.34px;transform-origin:0 50%;top:352.30px;font-size:10.5px;line-height:10.5px;font-weight:normal;color:#0a0a0a;letter-spacing:0.45px;transform:scaleX(0.8800);-webkit-text-stroke:0.1px #0a0a0a;">Y</div>
<div class="a" style="left:280.94px;transform-origin:0 50%;top:352.30px;font-size:10.5px;line-height:10.5px;font-weight:normal;color:#0a0a0a;letter-spacing:0.45px;transform:scaleX(0.8800);-webkit-text-stroke:0.1px #0a0a0a;">N</div>
<div class="a" style="left:294.04px;transform-origin:0 50%;top:352.30px;font-size:10.5px;line-height:10.5px;font-weight:normal;color:#0a0a0a;letter-spacing:0.45px;transform:scaleX(0.8800);-webkit-text-stroke:0.1px #0a0a0a;">N</div>
<div class="a" style="left:304.94px;transform-origin:0 50%;top:352.30px;font-size:10.5px;line-height:10.5px;font-weight:normal;color:#0a0a0a;letter-spacing:0.45px;transform:scaleX(0.8800);-webkit-text-stroke:0.1px #0a0a0a;">N</div>
<div class="a" style="left:320.54px;transform-origin:0 50%;top:352.30px;font-size:10.5px;line-height:10.5px;font-weight:normal;color:#0a0a0a;letter-spacing:0.45px;transform:scaleX(0.8800);-webkit-text-stroke:0.1px #0a0a0a;">N</div>
<div class="a" style="left:331.74px;transform-origin:0 50%;top:352.30px;font-size:10.5px;line-height:10.5px;font-weight:normal;color:#0a0a0a;letter-spacing:0.45px;transform:scaleX(0.8800);-webkit-text-stroke:0.1px #0a0a0a;">N</div>
<div class="a" style="left:341.84px;transform-origin:0 50%;top:352.30px;font-size:10.5px;line-height:10.5px;font-weight:normal;color:#0a0a0a;letter-spacing:0.45px;transform:scaleX(0.8800);-webkit-text-stroke:0.1px #0a0a0a;">Y</div>
<div class="a" style="left:353.29px;transform-origin:0 50%;top:352.30px;font-size:10.5px;line-height:10.5px;font-weight:normal;color:#0a0a0a;letter-spacing:0.45px;transform:scaleX(0.7803);-webkit-text-stroke:0.1px #0a0a0a;">STANDARD</div>
<div class="a" style="left:443.24px;transform-origin:0 50%;top:352.30px;font-size:10.5px;line-height:10.5px;font-weight:normal;color:#0a0a0a;letter-spacing:0.45px;transform:scaleX(0.8800);-webkit-text-stroke:0.1px #0a0a0a;">N</div>
<div class="a" style="right:393.64px;transform-origin:100% 50%;top:352.30px;font-size:10.5px;line-height:10.5px;font-weight:normal;color:#0a0a0a;letter-spacing:0.45px;transform:scaleX(0.8800);-webkit-text-stroke:0.1px #0a0a0a;">0</div>
<div class="a" style="right:302.64px;transform-origin:100% 50%;top:352.30px;font-size:10.5px;line-height:10.5px;font-weight:normal;color:#0a0a0a;letter-spacing:0.45px;transform:scaleX(0.8800);-webkit-text-stroke:0.1px #0a0a0a;">365</div>
<div class="a" style="right:219.54px;transform-origin:100% 50%;top:352.30px;font-size:10.5px;line-height:10.5px;font-weight:normal;color:#0a0a0a;letter-spacing:0.45px;transform:scaleX(0.8800);-webkit-text-stroke:0.1px #0a0a0a;">98</div>
<div class="a" style="right:135.64px;transform-origin:100% 50%;top:352.30px;font-size:10.5px;line-height:10.5px;font-weight:normal;color:#0a0a0a;letter-spacing:0.45px;transform:scaleX(0.8800);-webkit-text-stroke:0.1px #0a0a0a;">98</div>
<div class="a" style="left:55.59px;transform-origin:0 50%;top:371.10px;font-size:10.5px;line-height:10.5px;font-weight:normal;color:#3f5f82;letter-spacing:0.45px;transform:scaleX(0.7813);-webkit-text-stroke:0.1px #3f5f82;text-decoration:underline;text-decoration-color:#6f8aa6">ALERT1</div>
<div class="a" style="left:125.09px;transform-origin:0 50%;top:371.10px;font-size:10.5px;line-height:10.5px;font-weight:normal;color:#0a0a0a;letter-spacing:0.45px;transform:scaleX(0.7789);-webkit-text-stroke:0.1px #0a0a0a;">asdfsdfas</div>
<div class="a" style="left:269.34px;transform-origin:0 50%;top:371.10px;font-size:10.5px;line-height:10.5px;font-weight:normal;color:#0a0a0a;letter-spacing:0.45px;transform:scaleX(0.8800);-webkit-text-stroke:0.1px #0a0a0a;">Y</div>
<div class="a" style="left:280.94px;transform-origin:0 50%;top:371.10px;font-size:10.5px;line-height:10.5px;font-weight:normal;color:#0a0a0a;letter-spacing:0.45px;transform:scaleX(0.8800);-webkit-text-stroke:0.1px #0a0a0a;">Y</div>
<div class="a" style="left:294.04px;transform-origin:0 50%;top:371.10px;font-size:10.5px;line-height:10.5px;font-weight:normal;color:#0a0a0a;letter-spacing:0.45px;transform:scaleX(0.8800);-webkit-text-stroke:0.1px #0a0a0a;">Y</div>
<div class="a" style="left:304.94px;transform-origin:0 50%;top:371.10px;font-size:10.5px;line-height:10.5px;font-weight:normal;color:#0a0a0a;letter-spacing:0.45px;transform:scaleX(0.8800);-webkit-text-stroke:0.1px #0a0a0a;">Y</div>
<div class="a" style="left:320.54px;transform-origin:0 50%;top:371.10px;font-size:10.5px;line-height:10.5px;font-weight:normal;color:#0a0a0a;letter-spacing:0.45px;transform:scaleX(0.8800);-webkit-text-stroke:0.1px #0a0a0a;">Y</div>
<div class="a" style="left:331.74px;transform-origin:0 50%;top:371.10px;font-size:10.5px;line-height:10.5px;font-weight:normal;color:#0a0a0a;letter-spacing:0.45px;transform:scaleX(0.8800);-webkit-text-stroke:0.1px #0a0a0a;">Y</div>
<div class="a" style="left:341.84px;transform-origin:0 50%;top:371.10px;font-size:10.5px;line-height:10.5px;font-weight:normal;color:#0a0a0a;letter-spacing:0.45px;transform:scaleX(0.8800);-webkit-text-stroke:0.1px #0a0a0a;">Y</div>
<div class="a" style="left:353.29px;transform-origin:0 50%;top:371.10px;font-size:10.5px;line-height:10.5px;font-weight:normal;color:#0a0a0a;letter-spacing:0.45px;transform:scaleX(0.7803);-webkit-text-stroke:0.1px #0a0a0a;">STANDARD</div>
<div class="a" style="left:443.24px;transform-origin:0 50%;top:371.10px;font-size:10.5px;line-height:10.5px;font-weight:normal;color:#0a0a0a;letter-spacing:0.45px;transform:scaleX(0.8800);-webkit-text-stroke:0.1px #0a0a0a;">N</div>
<div class="a" style="left:55.62px;transform-origin:0 50%;top:390.00px;font-size:10.5px;line-height:10.5px;font-weight:normal;color:#3f5f82;letter-spacing:0.45px;transform:scaleX(0.7311);-webkit-text-stroke:0.1px #3f5f82;text-decoration:underline;text-decoration-color:#6f8aa6">GHGF</div>
<div class="a" style="left:125.04px;transform-origin:0 50%;top:390.00px;font-size:10.5px;line-height:10.5px;font-weight:normal;color:#0a0a0a;letter-spacing:0.45px;transform:scaleX(0.8694);-webkit-text-stroke:0.1px #0a0a0a;">3,653</div>
<div class="a" style="left:269.34px;transform-origin:0 50%;top:390.00px;font-size:10.5px;line-height:10.5px;font-weight:normal;color:#0a0a0a;letter-spacing:0.45px;transform:scaleX(0.8800);-webkit-text-stroke:0.1px #0a0a0a;">Y</div>
<div class="a" style="left:280.94px;transform-origin:0 50%;top:390.00px;font-size:10.5px;line-height:10.5px;font-weight:normal;color:#0a0a0a;letter-spacing:0.45px;transform:scaleX(0.8800);-webkit-text-stroke:0.1px #0a0a0a;">Y</div>
<div class="a" style="left:294.04px;transform-origin:0 50%;top:390.00px;font-size:10.5px;line-height:10.5px;font-weight:normal;color:#0a0a0a;letter-spacing:0.45px;transform:scaleX(0.8800);-webkit-text-stroke:0.1px #0a0a0a;">Y</div>
<div class="a" style="left:304.94px;transform-origin:0 50%;top:390.00px;font-size:10.5px;line-height:10.5px;font-weight:normal;color:#0a0a0a;letter-spacing:0.45px;transform:scaleX(0.8800);-webkit-text-stroke:0.1px #0a0a0a;">Y</div>
<div class="a" style="left:320.54px;transform-origin:0 50%;top:390.00px;font-size:10.5px;line-height:10.5px;font-weight:normal;color:#0a0a0a;letter-spacing:0.45px;transform:scaleX(0.8800);-webkit-text-stroke:0.1px #0a0a0a;">Y</div>
<div class="a" style="left:331.74px;transform-origin:0 50%;top:390.00px;font-size:10.5px;line-height:10.5px;font-weight:normal;color:#0a0a0a;letter-spacing:0.45px;transform:scaleX(0.8800);-webkit-text-stroke:0.1px #0a0a0a;">Y</div>
<div class="a" style="left:341.84px;transform-origin:0 50%;top:390.00px;font-size:10.5px;line-height:10.5px;font-weight:normal;color:#0a0a0a;letter-spacing:0.45px;transform:scaleX(0.8800);-webkit-text-stroke:0.1px #0a0a0a;">Y</div>
<div class="a" style="left:353.29px;transform-origin:0 50%;top:390.00px;font-size:10.5px;line-height:10.5px;font-weight:normal;color:#0a0a0a;letter-spacing:0.45px;transform:scaleX(0.7803);-webkit-text-stroke:0.1px #0a0a0a;">STANDARD</div>
<div class="a" style="left:443.24px;transform-origin:0 50%;top:390.00px;font-size:10.5px;line-height:10.5px;font-weight:normal;color:#0a0a0a;letter-spacing:0.45px;transform:scaleX(0.8800);-webkit-text-stroke:0.1px #0a0a0a;">N</div>
<div class="a" style="left:32.33px;transform-origin:0 50%;top:296.30px;font-size:10.5px;line-height:10.5px;font-weight:normal;color:#000;letter-spacing:0.45px;transform:scaleX(0.8964);-webkit-text-stroke:0.1px #000;z-index:4">Edit</div>
<div class="a" style="left:64.59px;transform-origin:0 50%;top:296.30px;font-size:10.5px;line-height:10.5px;font-weight:normal;color:#000;letter-spacing:0.45px;transform:scaleX(0.8776);-webkit-text-stroke:0.1px #000;z-index:4">Delete</div>
<div class="a" style="left:115.55px;transform-origin:0 50%;top:296.30px;font-size:10.5px;line-height:10.5px;font-weight:normal;color:#000;letter-spacing:0.45px;transform:scaleX(0.9444);-webkit-text-stroke:0.1px #000;z-index:4">New</div>
<div class="a" style="left:19.03px;transform-origin:0 50%;top:466.30px;font-size:10px;line-height:10px;font-weight:bold;color:#2d5888;letter-spacing:0.15px;transform:scaleX(0.9410);">Select</div>
<div class="a" style="left:54.33px;transform-origin:0 50%;top:466.30px;font-size:10px;line-height:10px;font-weight:bold;color:#2d5888;letter-spacing:0.15px;transform:scaleX(0.9467);">Alert Code</div>
<div class="a" style="left:105.20px;transform-origin:0 50%;top:466.30px;font-size:10px;line-height:10px;font-weight:bold;color:#2d5888;letter-spacing:0.15px;transform:scaleX(0.9904);">Alert Text</div>
<div class="a" style="left:153.54px;transform-origin:0 50%;top:466.30px;font-size:10px;line-height:10px;font-weight:bold;color:#2d5888;letter-spacing:0.15px;transform:scaleX(0.9209);">Season Code</div>
<div class="a" style="left:215.10px;transform-origin:0 50%;top:466.30px;font-size:10px;line-height:10px;font-weight:bold;color:#2d5888;letter-spacing:0.15px;">S</div>
<div class="a" style="left:223.50px;transform-origin:0 50%;top:466.30px;font-size:10px;line-height:10px;font-weight:bold;color:#2d5888;letter-spacing:0.15px;">M</div>
<div class="a" style="left:234.00px;transform-origin:0 50%;top:466.30px;font-size:10px;line-height:10px;font-weight:bold;color:#2d5888;letter-spacing:0.15px;">T</div>
<div class="a" style="left:242.50px;transform-origin:0 50%;top:466.30px;font-size:10px;line-height:10px;font-weight:bold;color:#2d5888;letter-spacing:0.15px;">W</div>
<div class="a" style="left:253.70px;transform-origin:0 50%;top:466.30px;font-size:10px;line-height:10px;font-weight:bold;color:#2d5888;letter-spacing:0.15px;">T</div>
<div class="a" style="left:261.30px;transform-origin:0 50%;top:466.30px;font-size:10px;line-height:10px;font-weight:bold;color:#2d5888;letter-spacing:0.15px;">F</div>
<div class="a" style="left:269.80px;transform-origin:0 50%;top:466.30px;font-size:10px;line-height:10px;font-weight:bold;color:#2d5888;letter-spacing:0.15px;">S</div>
<div class="a" style="left:278.23px;transform-origin:0 50%;top:466.30px;font-size:10px;line-height:10px;font-weight:bold;color:#2d5888;letter-spacing:0.15px;transform:scaleX(0.9451);">Min. Lead Day</div>
<div class="a" style="left:345.43px;transform-origin:0 50%;top:466.30px;font-size:10px;line-height:10px;font-weight:bold;color:#2d5888;letter-spacing:0.15px;transform:scaleX(0.9404);">Max. Lead Day</div>
<div class="a" style="left:413.92px;transform-origin:0 50%;top:466.30px;font-size:10px;line-height:10px;font-weight:bold;color:#2d5888;letter-spacing:0.15px;transform:scaleX(0.9648);">Forecast below(%)</div>
<div class="a" style="left:503.32px;transform-origin:0 50%;top:466.30px;font-size:10px;line-height:10px;font-weight:bold;color:#2d5888;letter-spacing:0.15px;transform:scaleX(0.9544);">Forecast above(%)</div>
<div class="a" style="left:593.52px;transform-origin:0 50%;top:466.30px;font-size:10px;line-height:10px;font-weight:bold;color:#2d5888;letter-spacing:0.15px;transform:scaleX(0.9645);">OTB below(%)</div>
<div class="a" style="left:662.52px;transform-origin:0 50%;top:466.30px;font-size:10px;line-height:10px;font-weight:bold;color:#2d5888;letter-spacing:0.15px;transform:scaleX(0.9538);">OTB above(%)</div>
<div class="a" style="left:54.36px;transform-origin:0 50%;top:482.60px;font-size:10.5px;line-height:10.5px;font-weight:normal;color:#3f5f82;letter-spacing:0.45px;transform:scaleX(0.8374);-webkit-text-stroke:0.1px #3f5f82;text-decoration:underline;text-decoration-color:#6f8aa6">OTB_test</div>
<div class="a" style="left:105.25px;transform-origin:0 50%;top:482.60px;font-size:10.5px;line-height:10.5px;font-weight:normal;color:#0a0a0a;letter-spacing:0.45px;transform:scaleX(0.8605);-webkit-text-stroke:0.1px #0a0a0a;">OTB Test</div>
<div class="a" style="left:215.54px;transform-origin:0 50%;top:482.60px;font-size:10.5px;line-height:10.5px;font-weight:normal;color:#0a0a0a;letter-spacing:0.45px;transform:scaleX(0.8800);-webkit-text-stroke:0.1px #0a0a0a;">Y</div>
<div class="a" style="left:224.14px;transform-origin:0 50%;top:482.60px;font-size:10.5px;line-height:10.5px;font-weight:normal;color:#0a0a0a;letter-spacing:0.45px;transform:scaleX(0.8800);-webkit-text-stroke:0.1px #0a0a0a;">Y</div>
<div class="a" style="left:234.84px;transform-origin:0 50%;top:482.60px;font-size:10.5px;line-height:10.5px;font-weight:normal;color:#0a0a0a;letter-spacing:0.45px;transform:scaleX(0.8800);-webkit-text-stroke:0.1px #0a0a0a;">Y</div>
<div class="a" style="left:242.54px;transform-origin:0 50%;top:482.60px;font-size:10.5px;line-height:10.5px;font-weight:normal;color:#0a0a0a;letter-spacing:0.45px;transform:scaleX(0.8800);-webkit-text-stroke:0.1px #0a0a0a;">Y</div>
<div class="a" style="left:253.54px;transform-origin:0 50%;top:482.60px;font-size:10.5px;line-height:10.5px;font-weight:normal;color:#0a0a0a;letter-spacing:0.45px;transform:scaleX(0.8800);-webkit-text-stroke:0.1px #0a0a0a;">Y</div>
<div class="a" style="left:262.24px;transform-origin:0 50%;top:482.60px;font-size:10.5px;line-height:10.5px;font-weight:normal;color:#0a0a0a;letter-spacing:0.45px;transform:scaleX(0.8800);-webkit-text-stroke:0.1px #0a0a0a;">Y</div>
<div class="a" style="left:269.84px;transform-origin:0 50%;top:482.60px;font-size:10.5px;line-height:10.5px;font-weight:normal;color:#0a0a0a;letter-spacing:0.45px;transform:scaleX(0.8800);-webkit-text-stroke:0.1px #0a0a0a;">Y</div>
<div class="a" style="right:491.84px;transform-origin:100% 50%;top:482.60px;font-size:10.5px;line-height:10.5px;font-weight:normal;color:#0a0a0a;letter-spacing:0.45px;transform:scaleX(0.8800);-webkit-text-stroke:0.1px #0a0a0a;">50</div>
<div class="a" style="right:263.84px;transform-origin:100% 50%;top:482.60px;font-size:10.5px;line-height:10.5px;font-weight:normal;color:#0a0a0a;letter-spacing:0.45px;transform:scaleX(0.8800);-webkit-text-stroke:0.1px #0a0a0a;">90</div>
<div class="a" style="left:54.44px;transform-origin:0 50%;top:500.70px;font-size:10.5px;line-height:10.5px;font-weight:normal;color:#3f5f82;letter-spacing:0.45px;transform:scaleX(0.6902);-webkit-text-stroke:0.1px #3f5f82;text-decoration:underline;text-decoration-color:#6f8aa6">OTB_TEST</div>
<div class="a" style="left:105.26px;transform-origin:0 50%;top:500.70px;font-size:10.5px;line-height:10.5px;font-weight:normal;color:#0a0a0a;letter-spacing:0.45px;transform:scaleX(0.8472);-webkit-text-stroke:0.1px #0a0a0a;">jyhgjhg</div>
<div class="a" style="left:215.54px;transform-origin:0 50%;top:500.70px;font-size:10.5px;line-height:10.5px;font-weight:normal;color:#0a0a0a;letter-spacing:0.45px;transform:scaleX(0.8800);-webkit-text-stroke:0.1px #0a0a0a;">Y</div>
<div class="a" style="left:224.14px;transform-origin:0 50%;top:500.70px;font-size:10.5px;line-height:10.5px;font-weight:normal;color:#0a0a0a;letter-spacing:0.45px;transform:scaleX(0.8800);-webkit-text-stroke:0.1px #0a0a0a;">Y</div>
<div class="a" style="left:234.84px;transform-origin:0 50%;top:500.70px;font-size:10.5px;line-height:10.5px;font-weight:normal;color:#0a0a0a;letter-spacing:0.45px;transform:scaleX(0.8800);-webkit-text-stroke:0.1px #0a0a0a;">Y</div>
<div class="a" style="left:242.54px;transform-origin:0 50%;top:500.70px;font-size:10.5px;line-height:10.5px;font-weight:normal;color:#0a0a0a;letter-spacing:0.45px;transform:scaleX(0.8800);-webkit-text-stroke:0.1px #0a0a0a;">Y</div>
<div class="a" style="left:253.54px;transform-origin:0 50%;top:500.70px;font-size:10.5px;line-height:10.5px;font-weight:normal;color:#0a0a0a;letter-spacing:0.45px;transform:scaleX(0.8800);-webkit-text-stroke:0.1px #0a0a0a;">Y</div>
<div class="a" style="left:262.24px;transform-origin:0 50%;top:500.70px;font-size:10.5px;line-height:10.5px;font-weight:normal;color:#0a0a0a;letter-spacing:0.45px;transform:scaleX(0.8800);-webkit-text-stroke:0.1px #0a0a0a;">Y</div>
<div class="a" style="left:269.84px;transform-origin:0 50%;top:500.70px;font-size:10.5px;line-height:10.5px;font-weight:normal;color:#0a0a0a;letter-spacing:0.45px;transform:scaleX(0.8800);-webkit-text-stroke:0.1px #0a0a0a;">Y</div>
<div class="a" style="left:32.58px;transform-origin:0 50%;top:450.40px;font-size:10.5px;line-height:10.5px;font-weight:normal;color:#000;letter-spacing:0.45px;transform:scaleX(0.8964);-webkit-text-stroke:0.1px #000;z-index:4">Edit</div>
<div class="a" style="left:72.04px;transform-origin:0 50%;top:450.40px;font-size:10.5px;line-height:10.5px;font-weight:normal;color:#000;letter-spacing:0.45px;transform:scaleX(0.8776);-webkit-text-stroke:0.1px #000;z-index:4">Delete</div>
<div class="a" style="left:123.05px;transform-origin:0 50%;top:450.40px;font-size:10.5px;line-height:10.5px;font-weight:normal;color:#000;letter-spacing:0.45px;transform:scaleX(0.9444);-webkit-text-stroke:0.1px #000;z-index:4">New</div>
<div class="a" style="left:19.03px;transform-origin:0 50%;top:587.50px;font-size:10px;line-height:10px;font-weight:bold;color:#2d5888;letter-spacing:0.15px;transform:scaleX(0.9410);">Select</div>
<div class="a" style="left:54.33px;transform-origin:0 50%;top:587.50px;font-size:10px;line-height:10px;font-weight:bold;color:#2d5888;letter-spacing:0.15px;transform:scaleX(0.9467);">Alert Code</div>
<div class="a" style="left:105.20px;transform-origin:0 50%;top:587.50px;font-size:10px;line-height:10px;font-weight:bold;color:#2d5888;letter-spacing:0.15px;transform:scaleX(0.9904);">Alert Text</div>
<div class="a" style="left:153.54px;transform-origin:0 50%;top:587.50px;font-size:10px;line-height:10px;font-weight:bold;color:#2d5888;letter-spacing:0.15px;transform:scaleX(0.9209);">Season Code</div>
<div class="a" style="left:215.10px;transform-origin:0 50%;top:587.50px;font-size:10px;line-height:10px;font-weight:bold;color:#2d5888;letter-spacing:0.15px;">S</div>
<div class="a" style="left:223.50px;transform-origin:0 50%;top:587.50px;font-size:10px;line-height:10px;font-weight:bold;color:#2d5888;letter-spacing:0.15px;">M</div>
<div class="a" style="left:234.00px;transform-origin:0 50%;top:587.50px;font-size:10px;line-height:10px;font-weight:bold;color:#2d5888;letter-spacing:0.15px;">T</div>
<div class="a" style="left:242.50px;transform-origin:0 50%;top:587.50px;font-size:10px;line-height:10px;font-weight:bold;color:#2d5888;letter-spacing:0.15px;">W</div>
<div class="a" style="left:253.70px;transform-origin:0 50%;top:587.50px;font-size:10px;line-height:10px;font-weight:bold;color:#2d5888;letter-spacing:0.15px;">T</div>
<div class="a" style="left:261.30px;transform-origin:0 50%;top:587.50px;font-size:10px;line-height:10px;font-weight:bold;color:#2d5888;letter-spacing:0.15px;">F</div>
<div class="a" style="left:269.80px;transform-origin:0 50%;top:587.50px;font-size:10px;line-height:10px;font-weight:bold;color:#2d5888;letter-spacing:0.15px;">S</div>
<div class="a" style="left:278.53px;transform-origin:0 50%;top:587.50px;font-size:10px;line-height:10px;font-weight:bold;color:#2d5888;letter-spacing:0.15px;transform:scaleX(0.9348);">Min. Lead Day</div>
<div class="a" style="left:344.93px;transform-origin:0 50%;top:587.50px;font-size:10px;line-height:10px;font-weight:bold;color:#2d5888;letter-spacing:0.15px;transform:scaleX(0.9461);">Max. Lead Day</div>
<div class="a" style="left:414.53px;transform-origin:0 50%;top:587.50px;font-size:10px;line-height:10px;font-weight:bold;color:#2d5888;letter-spacing:0.15px;transform:scaleX(0.9498);">Threshold(%)</div>
<div class="a" style="left:479.11px;transform-origin:0 50%;top:587.50px;font-size:10px;line-height:10px;font-weight:bold;color:#2d5888;letter-spacing:0.15px;transform:scaleX(0.9734);">Auto Apply</div>
<div class="a" style="left:54.36px;transform-origin:0 50%;top:603.70px;font-size:10.5px;line-height:10.5px;font-weight:normal;color:#3f5f82;letter-spacing:0.45px;transform:scaleX(0.8301);-webkit-text-stroke:0.1px #3f5f82;text-decoration:underline;text-decoration-color:#6f8aa6">OB_Test</div>
<div class="a" style="left:105.24px;transform-origin:0 50%;top:603.70px;font-size:10.5px;line-height:10.5px;font-weight:normal;color:#0a0a0a;letter-spacing:0.45px;transform:scaleX(0.8683);-webkit-text-stroke:0.1px #0a0a0a;">OB Test</div>
<div class="a" style="left:215.54px;transform-origin:0 50%;top:603.70px;font-size:10.5px;line-height:10.5px;font-weight:normal;color:#0a0a0a;letter-spacing:0.45px;transform:scaleX(0.8800);-webkit-text-stroke:0.1px #0a0a0a;">Y</div>
<div class="a" style="left:224.14px;transform-origin:0 50%;top:603.70px;font-size:10.5px;line-height:10.5px;font-weight:normal;color:#0a0a0a;letter-spacing:0.45px;transform:scaleX(0.8800);-webkit-text-stroke:0.1px #0a0a0a;">Y</div>
<div class="a" style="left:234.84px;transform-origin:0 50%;top:603.70px;font-size:10.5px;line-height:10.5px;font-weight:normal;color:#0a0a0a;letter-spacing:0.45px;transform:scaleX(0.8800);-webkit-text-stroke:0.1px #0a0a0a;">Y</div>
<div class="a" style="left:242.54px;transform-origin:0 50%;top:603.70px;font-size:10.5px;line-height:10.5px;font-weight:normal;color:#0a0a0a;letter-spacing:0.45px;transform:scaleX(0.8800);-webkit-text-stroke:0.1px #0a0a0a;">Y</div>
<div class="a" style="left:253.54px;transform-origin:0 50%;top:603.70px;font-size:10.5px;line-height:10.5px;font-weight:normal;color:#0a0a0a;letter-spacing:0.45px;transform:scaleX(0.8800);-webkit-text-stroke:0.1px #0a0a0a;">Y</div>
<div class="a" style="left:262.24px;transform-origin:0 50%;top:603.70px;font-size:10.5px;line-height:10.5px;font-weight:normal;color:#0a0a0a;letter-spacing:0.45px;transform:scaleX(0.8800);-webkit-text-stroke:0.1px #0a0a0a;">Y</div>
<div class="a" style="left:269.84px;transform-origin:0 50%;top:603.70px;font-size:10.5px;line-height:10.5px;font-weight:normal;color:#0a0a0a;letter-spacing:0.45px;transform:scaleX(0.8800);-webkit-text-stroke:0.1px #0a0a0a;">Y</div>
<div class="a" style="right:649.84px;transform-origin:100% 50%;top:603.70px;font-size:10.5px;line-height:10.5px;font-weight:normal;color:#0a0a0a;letter-spacing:0.45px;transform:scaleX(0.8800);-webkit-text-stroke:0.1px #0a0a0a;">0</div>
<div class="a" style="right:580.84px;transform-origin:100% 50%;top:603.70px;font-size:10.5px;line-height:10.5px;font-weight:normal;color:#0a0a0a;letter-spacing:0.45px;transform:scaleX(0.8800);-webkit-text-stroke:0.1px #0a0a0a;">90</div>
<div class="a" style="right:516.34px;transform-origin:100% 50%;top:603.70px;font-size:10.5px;line-height:10.5px;font-weight:normal;color:#0a0a0a;letter-spacing:0.45px;transform:scaleX(0.8800);-webkit-text-stroke:0.1px #0a0a0a;">2</div>
<div class="a" style="left:479.14px;transform-origin:0 50%;top:603.70px;font-size:10.5px;line-height:10.5px;font-weight:normal;color:#0a0a0a;letter-spacing:0.45px;transform:scaleX(0.8800);-webkit-text-stroke:0.1px #0a0a0a;">N</div>
<div class="a" style="left:54.39px;transform-origin:0 50%;top:622.80px;font-size:10.5px;line-height:10.5px;font-weight:normal;color:#3f5f82;letter-spacing:0.45px;transform:scaleX(0.7859);-webkit-text-stroke:0.1px #3f5f82;text-decoration:underline;text-decoration-color:#6f8aa6">OB_TEST</div>
<div class="a" style="left:105.26px;transform-origin:0 50%;top:622.80px;font-size:10.5px;line-height:10.5px;font-weight:normal;color:#0a0a0a;letter-spacing:0.45px;transform:scaleX(0.8446);-webkit-text-stroke:0.1px #0a0a0a;">jkkjhk</div>
<div class="a" style="left:215.54px;transform-origin:0 50%;top:622.80px;font-size:10.5px;line-height:10.5px;font-weight:normal;color:#0a0a0a;letter-spacing:0.45px;transform:scaleX(0.8800);-webkit-text-stroke:0.1px #0a0a0a;">Y</div>
<div class="a" style="left:224.14px;transform-origin:0 50%;top:622.80px;font-size:10.5px;line-height:10.5px;font-weight:normal;color:#0a0a0a;letter-spacing:0.45px;transform:scaleX(0.8800);-webkit-text-stroke:0.1px #0a0a0a;">Y</div>
<div class="a" style="left:234.84px;transform-origin:0 50%;top:622.80px;font-size:10.5px;line-height:10.5px;font-weight:normal;color:#0a0a0a;letter-spacing:0.45px;transform:scaleX(0.8800);-webkit-text-stroke:0.1px #0a0a0a;">Y</div>
<div class="a" style="left:242.54px;transform-origin:0 50%;top:622.80px;font-size:10.5px;line-height:10.5px;font-weight:normal;color:#0a0a0a;letter-spacing:0.45px;transform:scaleX(0.8800);-webkit-text-stroke:0.1px #0a0a0a;">Y</div>
<div class="a" style="left:253.54px;transform-origin:0 50%;top:622.80px;font-size:10.5px;line-height:10.5px;font-weight:normal;color:#0a0a0a;letter-spacing:0.45px;transform:scaleX(0.8800);-webkit-text-stroke:0.1px #0a0a0a;">Y</div>
<div class="a" style="left:262.24px;transform-origin:0 50%;top:622.80px;font-size:10.5px;line-height:10.5px;font-weight:normal;color:#0a0a0a;letter-spacing:0.45px;transform:scaleX(0.8800);-webkit-text-stroke:0.1px #0a0a0a;">Y</div>
<div class="a" style="left:269.84px;transform-origin:0 50%;top:622.80px;font-size:10.5px;line-height:10.5px;font-weight:normal;color:#0a0a0a;letter-spacing:0.45px;transform:scaleX(0.8800);-webkit-text-stroke:0.1px #0a0a0a;">Y</div>
<div class="a" style="left:479.14px;transform-origin:0 50%;top:622.80px;font-size:10.5px;line-height:10.5px;font-weight:normal;color:#0a0a0a;letter-spacing:0.45px;transform:scaleX(0.8800);-webkit-text-stroke:0.1px #0a0a0a;">N</div>
<div class="a" style="left:32.18px;transform-origin:0 50%;top:567.20px;font-size:10.5px;line-height:10.5px;font-weight:normal;color:#000;letter-spacing:0.45px;transform:scaleX(0.8964);-webkit-text-stroke:0.1px #000;z-index:4">Edit</div>
<div class="a" style="left:64.74px;transform-origin:0 50%;top:567.20px;font-size:10.5px;line-height:10.5px;font-weight:normal;color:#000;letter-spacing:0.45px;transform:scaleX(0.8776);-webkit-text-stroke:0.1px #000;z-index:4">Delete</div>
<div class="a" style="left:115.55px;transform-origin:0 50%;top:567.20px;font-size:10.5px;line-height:10.5px;font-weight:normal;color:#000;letter-spacing:0.45px;transform:scaleX(0.9444);-webkit-text-stroke:0.1px #000;z-index:4">New</div>
<div class="a" style="left:2.17px;transform-origin:0 50%;top:662.70px;font-size:8px;line-height:8px;font-weight:normal;color:#111;letter-spacing:0.45px;transform:scaleX(0.8234);-webkit-text-stroke:0.1px #111;">Version 5.0, Service Pack 5.0.03.03</div>
<div class="a" style="left:786.47px;transform-origin:0 50%;top:662.30px;font-size:8px;line-height:8px;font-weight:normal;color:#111;letter-spacing:0.45px;transform:scaleX(0.8291);-webkit-text-stroke:0.1px #111;">© 2007,2008,2009 MICROS Systems, Inc. All rights reserved</div>
<div class="a" style="left:275.07px;transform-origin:0 50%;top:652.50px;font-size:9.5px;line-height:9.5px;font-weight:normal;color:#3b5b7e;letter-spacing:0.45px;transform:scaleX(0.9124);-webkit-text-stroke:0.1px #3b5b7e;text-decoration:underline">Home</div>
<div class="a" style="left:315.10px;transform-origin:0 50%;top:652.50px;font-size:9.5px;line-height:9.5px;font-weight:normal;color:#3b5b7e;letter-spacing:0.45px;transform:scaleX(0.8425);-webkit-text-stroke:0.1px #3b5b7e;text-decoration:underline">Forecast Analysis</div>
<div class="a" style="left:399.19px;transform-origin:0 50%;top:652.50px;font-size:9.5px;line-height:9.5px;font-weight:normal;color:#3b5b7e;letter-spacing:0.45px;transform:scaleX(0.8688);-webkit-text-stroke:0.1px #3b5b7e;text-decoration:underline">Groups</div>
<div class="a" style="left:443.48px;transform-origin:0 50%;top:652.50px;font-size:9.5px;line-height:9.5px;font-weight:normal;color:#3b5b7e;letter-spacing:0.45px;transform:scaleX(0.8883);-webkit-text-stroke:0.1px #3b5b7e;text-decoration:underline">Recommendation</div>
<div class="a" style="left:530.27px;transform-origin:0 50%;top:652.50px;font-size:9.5px;line-height:9.5px;font-weight:normal;color:#3b5b7e;letter-spacing:0.45px;transform:scaleX(0.8989);-webkit-text-stroke:0.1px #3b5b7e;text-decoration:underline">Rate Shopper</div>
<div class="a" style="left:602.17px;transform-origin:0 50%;top:652.50px;font-size:9.5px;line-height:9.5px;font-weight:normal;color:#3b5b7e;letter-spacing:0.45px;transform:scaleX(0.9023);-webkit-text-stroke:0.1px #3b5b7e;text-decoration:underline">Reports</div>
<div class="a" style="left:649.83px;transform-origin:0 50%;top:652.50px;font-size:9.5px;line-height:9.5px;font-weight:bold;color:#1a1f4a;letter-spacing:0.15px;transform:scaleX(0.9965);text-decoration:underline">Configuration</div>
</body></html>
